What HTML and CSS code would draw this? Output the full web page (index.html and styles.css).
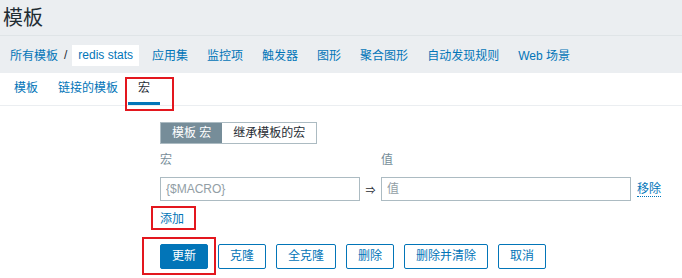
FILE: index.html
```html
<!DOCTYPE html>
<html lang="zh">
<head>
<meta charset="utf-8">
<title>模板</title>
<link rel="stylesheet" href="styles.css">
</head>
<body>
<header class="page-header"><h1 class="page-title">模板</h1></header>
<nav class="subnav">
  <a class="crumb" href="#">所有模板</a>
  <span class="crumb-sep">/</span>
  <span class="crumb-current">redis stats</span>
  <ul class="subnav-list">
    <li><a href="#">应用集</a></li>
    <li><a href="#">监控项</a></li>
    <li><a href="#">触发器</a></li>
    <li><a href="#">图形</a></li>
    <li><a href="#">聚合图形</a></li>
    <li><a href="#">自动发现规则</a></li>
    <li><a href="#">Web 场景</a></li>
  </ul>
</nav>
<main class="panel">
  <div class="tabs">
    <a class="tab" href="#">模板</a>
    <a class="tab" href="#">链接的模板</a>
    <a class="tab active" href="#">宏</a>
  </div>
  <form class="form">
    <div class="radio-group">
      <span class="radio selected">模板 宏</span>
      <span class="radio">继承模板的宏</span>
    </div>
    <div class="macro-grid">
      <span class="col-label">宏</span>
      <span></span>
      <span class="col-label">值</span>
      <span></span>
      <input class="field" type="text" placeholder="{$MACRO}">
      <span class="arrow">⇒</span>
      <input class="field" type="text" placeholder="值">
      <a class="remove" href="#">移除</a>
    </div>
    <div class="add-row"><a class="link" href="#">添加</a></div>
    <div class="buttons">
      <button class="btn primary" type="button">更新</button>
      <button class="btn" type="button">克隆</button>
      <button class="btn" type="button">全克隆</button>
      <button class="btn" type="button">删除</button>
      <button class="btn" type="button">删除并清除</button>
      <button class="btn" type="button">取消</button>
    </div>
  </form>
  <div class="mark mark-tab"></div>
  <div class="mark mark-add"></div>
  <div class="mark mark-update"></div>
</main>
</body>
</html>
```
FILE: styles.css
```css
* { box-sizing: border-box; }
html, body { margin: 0; padding: 0; }
body {
  background: #ebeef1;
  font-family: "Liberation Sans", "Noto Sans CJK SC", "DejaVu Sans", sans-serif;
  font-size: 12px;
  color: #1f2c33;
  width: 682px;
  height: 278px;
  overflow: hidden;
}
a { color: #0275b8; text-decoration: none; }

.page-header {
  height: 36px;
  border-bottom: 1px solid #dfe4e7;
  padding-left: 3px;
}
.page-title {
  margin: 0;
  font-size: 20px;
  font-weight: normal;
  line-height: 37px;
  color: #1f2c33;
}

.subnav {
  height: 37px;
  display: flex;
  align-items: center;
  padding-left: 10px;
}
.crumb-sep { margin: 0 5px 0 6px; color: #1f2c33; }
.crumb-current {
  background: #fff;
  height: 21px;
  line-height: 21px;
  padding: 0 6px;
  margin-top: 1px;
  color: #0275b8;
}
.subnav-list {
  list-style: none;
  margin: 0 0 0 13px;
  padding: 0;
  display: flex;
  gap: 19px;
}

.panel {
  position: relative;
  background: #fff;
  height: 205px;
}
.tabs {
  display: flex;
  height: 33px;
  padding-left: 4px;
  border-bottom: 1px solid #ebeef1;
}
.tab {
  padding: 0 10px;
  line-height: 31px;
  border-bottom: 3px solid transparent;
}
.tab.active { color: #1f2c33; border-bottom-color: #0275b8; }

.form { padding: 16px 0 0 160px; }
.radio-group {
  display: inline-flex;
  border: 1px solid #acbbc2;
  height: 22px;
}
.radio {
  padding: 0 11px;
  line-height: 20px;
  color: #1f2c33;
}
.radio.selected { background: #768d99; color: #fff; }

.macro-grid {
  display: grid;
  grid-template-columns: 200px 21px 250px auto;
  grid-template-rows: 18px 24px;
  row-gap: 8px;
  margin-top: 7px;
  align-items: center;
}
.col-label { color: #768d99; line-height: 18px; }
.field {
  height: 24px;
  border: 1px solid #acbbc2;
  padding: 0 5px;
  font: inherit;
  color: #1f2c33;
  width: 100%;
}
.field::placeholder { color: #929ea5; }
.arrow { text-align: center; font-size: 10px; color: #1f2c33; }
.remove {
  justify-self: start;
  margin-left: 6px;
  border-bottom: 1px dotted #0275b8;
  line-height: 14px;
}

.add-row { margin-top: 9px; line-height: 18px; }
.buttons {
  display: flex;
  gap: 10px;
  margin-top: 16px;
}
.btn {
  height: 25px;
  padding: 0 11px;
  border: 1px solid #0275b8;
  border-radius: 2px;
  background: #fff;
  color: #0275b8;
  font: inherit;
  line-height: 23px;
}
.btn.primary { background: #0275b8; color: #fff; }

.mark {
  position: absolute;
  border: 2px solid #e3171e;
  pointer-events: none;
}
.mark-tab { left: 125px; top: 4px; width: 49px; height: 34px; }
.mark-add { left: 151px; top: 133px; width: 45px; height: 24px; }
.mark-update { left: 142px; top: 164px; width: 74px; height: 38px; }
```
